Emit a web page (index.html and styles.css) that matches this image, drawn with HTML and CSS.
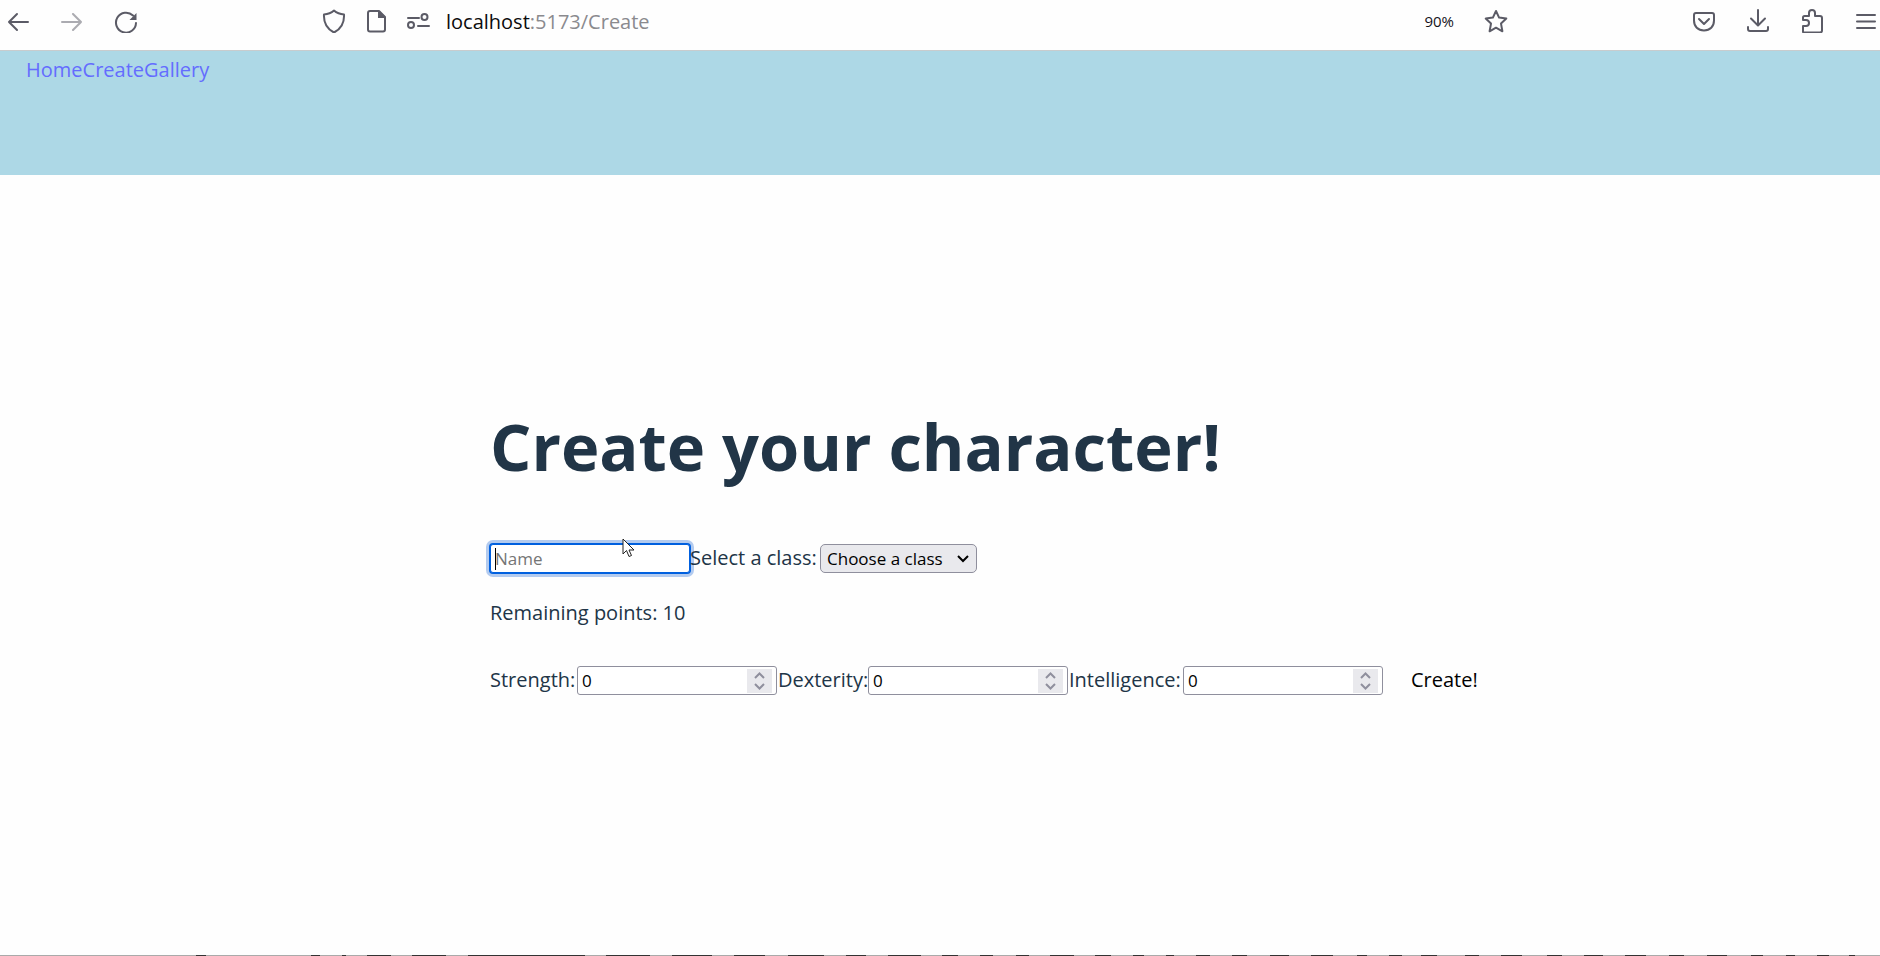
FILE: index.html
```html
<!DOCTYPE html>
<html lang="en">
<head>
<meta charset="utf-8">
<title>Create</title>
<link rel="stylesheet" href="styles.css">
</head>
<body>
<div class="toolbar">
  <div class="group nav-buttons">
    <button type="button" class="icon" aria-label="Back"><svg viewBox="0 0 24 24"><path d="M22 13H3M11 5l-8 8 8 8"/></svg></button>
    <button type="button" class="icon disabled" aria-label="Forward"><svg viewBox="0 0 24 24"><path d="M2 13h19M13 5l8 8-8 8"/></svg></button>
    <button type="button" class="icon" aria-label="Reload"><svg viewBox="0 0 24 24"><path d="M22 14a10 10 0 1 1-3-7.500"/><path class="solid" d="M22.500 4v7h-7z"/></svg></button>
  </div>
  <div class="group site-info">
    <button type="button" class="icon" aria-label="Tracking protection"><svg viewBox="0 0 24 24"><path d="M12 1.500Q16 5 22 5.500C22.500 14 19 20 12 23.500 5 20 1.500 14 2 5.500Q8 5 12 1.500z"/></svg></button>
    <button type="button" class="icon" aria-label="Page information"><svg viewBox="0 0 24 24"><path d="M6 2h9l6 6v12.500a2 2 0 0 1-2 2H6a2 2 0 0 1-2-2V4a2 2 0 0 1 2-2z"/><path class="solid" d="M14 2h1.500L21 7.500V9h-7z"/></svg></button>
    <button type="button" class="icon" aria-label="Permissions"><svg viewBox="0 0 24 24"><path d="M2 9h11M12 17h11"/><circle cx="18.500" cy="8" r="3"/><circle cx="5" cy="16" r="3"/></svg></button>
  </div>
  <div class="url"><span class="host">localhost</span>:5173/Create</div>
  <div class="group page-actions">
    <span class="zoom">90%</span>
    <button type="button" class="icon" aria-label="Bookmark"><svg viewBox="0 0 24 24"><path d="M12 2l3.100 6.600 7.200 1-5.300 5 1.400 7.700L12 18.700l-6.400 3.600L7 14.600l-5.300-5 7.200-1z"/></svg></button>
  </div>
  <div class="group browser-actions">
    <button type="button" class="icon" aria-label="Pocket"><svg viewBox="0 0 24 24"><path d="M4 4h16a2 2 0 0 1 2 2v5.500c0 6-4 10-10 10s-10-4-10-10V6a2 2 0 0 1 2-2z"/><path d="M7 10l5 5 5-5"/></svg></button>
    <button type="button" class="icon" aria-label="Downloads"><svg viewBox="0 0 24 24"><path d="M12 1v15M5 9.500l7 7 7-7M2 18v2a2 2 0 0 0 2 2h16a2 2 0 0 0 2-2v-2"/></svg></button>
    <button type="button" class="icon" aria-label="Extensions"><svg viewBox="0 0 24 24"><path d="M3 23V17h3a3 3 0 0 0 0-6H3V8.500A1.500 1.500 0 0 1 4.500 7H9V4a3 3 0 0 1 6 0v3h5a2 2 0 0 1 2 2v12.500a2 2 0 0 1-2 2H3.500z"/></svg></button>
    <button type="button" class="icon" aria-label="Menu"><svg viewBox="0 0 24 24"><path d="M3 6h18M3 12.500h18M3 19h18"/></svg></button>
  </div>
</div>
<header class="site-header">
  <nav class="links"><a href="#home">Home</a><a href="#create">Create</a><a href="#gallery">Gallery</a></nav>
</header>
<main class="content">
  <h1 class="title">Create your character!</h1>
  <form class="form">
    <div class="row">
      <div class="name-field">
        <input class="box name" type="text" placeholder="Name" aria-label="Name">
        <span class="caret"></span>
        <svg class="pointer" viewBox="0 0 14 20"><path d="M1 1v15l3.500-3.500L7 18.500l2.500-1-2.500-5.500h5z"/></svg>
      </div>
      <label class="label class-label" for="class">Select a class:</label>
      <div class="select-field">
        <select class="select" id="class"><option>Choose a class</option></select>
        <svg class="chevron" viewBox="0 0 12 8"><path d="M1 1l5 5 5-5"/></svg>
      </div>
    </div>
    <p class="points">Remaining points: 10</p>
    <div class="row">
      <label class="label strength" for="str">Strength:</label>
      <div class="number"><input class="box" id="str" type="number" value="0"><svg class="spinner" viewBox="0 0 25 24"><path d="M8 9l4.500-4.500L17 9M8 15l4.500 4.500L17 15"/></svg></div>
      <label class="label dexterity" for="dex">Dexterity:</label>
      <div class="number"><input class="box" id="dex" type="number" value="0"><svg class="spinner" viewBox="0 0 25 24"><path d="M8 9l4.500-4.500L17 9M8 15l4.500 4.500L17 15"/></svg></div>
      <label class="label intelligence" for="int">Intelligence:</label>
      <div class="number"><input class="box" id="int" type="number" value="0"><svg class="spinner" viewBox="0 0 25 24"><path d="M8 9l4.500-4.500L17 9M8 15l4.500 4.500L17 15"/></svg></div>
      <button class="submit" type="button">Create!</button>
    </div>
  </form>
</main>
<svg class="edge" viewBox="0 0 1880 1" preserveAspectRatio="none"><path d="M196 0h10v1h-10zM311 0h9v1h-9zM342 0h4v1h-4zM367 0h24v1h-24zM412 0h34v1h-34zM468 0h117v1h-117zM606 0h44v1h-44zM672 0h40v1h-40zM734 0h31v1h-31zM788 0h36v1h-36zM846 0h20v1h-20zM888 0h33v1h-33zM942 0h16v1h-16zM980 0h13v1h-13zM1016 0h13v1h-13zM1050 0h24v1h-24zM1095 0h16v1h-16zM1133 0h11v1h-11zM1166 0h8v1h-8zM1196 0h14v1h-14zM1232 0h15v1h-15zM1270 0h19v1h-19zM1311 0h22v1h-22zM1357 0h10v1h-10zM1389 0h13v1h-13zM1421 0h16v1h-16zM1465 0h14v1h-14zM1501 0h21v1h-21zM1547 0h15v1h-15zM1584 0h19v1h-19zM1625 0h21v1h-21zM1669 0h15v1h-15zM1707 0h20v1h-20zM1751 0h12v1h-12zM1786 0h9v1h-9zM1817 0h12v1h-12zM1849 0h6v1h-6z"/></svg>
</body>
</html>
```
FILE: styles.css
```css
* { box-sizing: border-box; }
body {
  margin: 0;
  min-height: 100vh;
  display: flex;
  flex-direction: column;
  background: #fefefe;
  color: #213547;
  font: 20px/32px "Open Sans", "Noto Sans", sans-serif;
}
button { border: 0; background: none; padding: 0; font: inherit; }
.toolbar {
  display: flex;
  align-items: center;
  padding: 0 2px 8px 6px;
  height: 51px;
  border-bottom: 1px solid #c8ccce;
}
.group { display: flex; align-items: center; gap: 30px; }
.site-info { gap: 18px; margin-left: 184px; }
.icon { width: 24px; height: 24px; }
.icon svg { display: block; width: 24px; height: 24px; fill: none; stroke: #5b5b66; stroke-width: 2; stroke-linecap: round; stroke-linejoin: round; }
.icon .solid { fill: #5b5b66; stroke: none; }
.disabled { opacity: 0.5; }
.url { margin-left: 16px; flex: 1; padding-top: 2px; color: #8a8a8e; font-size: 20px; }
.host { color: #0c0c0d; }
.zoom { color: #15141a; font-size: 15px; }
.browser-actions { margin-left: 184px; }
.site-header { background: #add8e6; height: 124px; padding: 3px 26px; }
.links { display: flex; }
.links a { color: #646cff; text-decoration: none; }
.content { flex: 1; padding: 225px 24px 0 490px; }
.title { margin: 0; font-size: 65px; line-height: 92px; font-weight: 700; }
.form { margin-top: 50px; }
.row { display: flex; align-items: center; height: 32px; }
.name-field, .select-field, .number { position: relative; display: flex; flex: none; }
.label { position: relative; white-space: nowrap; flex: none; }
.class-label { width: 130px; }
.strength { width: 87px; }
.dexterity { width: 91px; padding-left: 1px; }
.intelligence { width: 115px; padding-left: 1px; }
.box {
  width: 200px;
  height: 29px;
  margin: 0;
  padding: 0 4px;
  border: 1px solid #8f8f9d;
  border-radius: 3px;
  background: #fff;
  color: #000;
  font: 17px "Open Sans", "Noto Sans", sans-serif;
  appearance: textfield;
}
.box::-webkit-inner-spin-button { appearance: none; margin: 0; }
.name { border-color: #0060df; outline: 0; box-shadow: 0 0 0 1px #0060df, 0 0 0 4px #b3cbef; }
.name::placeholder { color: #757575; }
.caret { position: absolute; left: 5px; top: 4px; width: 1px; height: 22px; background: #000; }
.pointer { position: absolute; left: 132px; top: -6px; width: 14px; height: 20px; fill: #fff; stroke: #222; stroke-width: 1; }
.select {
  width: 157px;
  height: 29px;
  padding: 0 6px;
  border: 1px solid #8f8f9d;
  border-radius: 5px;
  background: #e9e9ed;
  color: #000;
  font: 17px "Open Sans", "Noto Sans", sans-serif;
  appearance: none;
}
.chevron { position: absolute; right: 8px; top: 11px; width: 12px; height: 8px; fill: none; stroke: #000; stroke-width: 2; pointer-events: none; }
.points { margin: 23px 0 35px; }
.spinner { position: absolute; right: 5px; top: 3px; width: 25px; height: 24px; background: #e9e9ed; fill: none; stroke: #8f8f9d; stroke-width: 2; pointer-events: none; }
.submit { margin-left: 28px; color: #000; }
.edge { display: block; flex: none; width: 100%; height: 1px; background: #aaa; fill: #333; }
```
